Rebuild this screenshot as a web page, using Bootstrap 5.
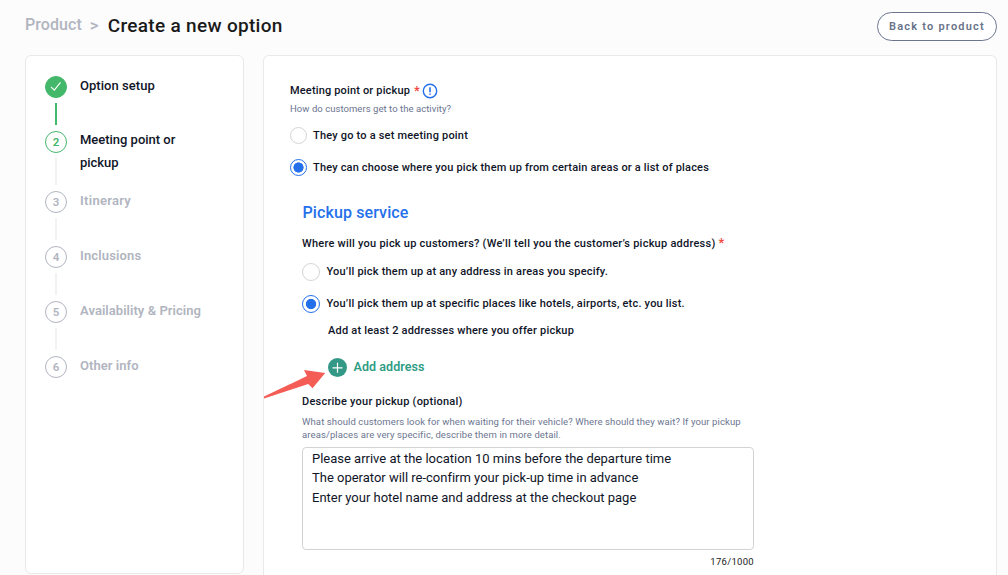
<!DOCTYPE html>
<html lang="en">
<head>
<meta charset="utf-8">
<meta name="viewport" content="width=device-width, initial-scale=1">
<title>Create a new option</title>
<link href="https://cdn.jsdelivr.net/npm/bootstrap@5.3.0/dist/css/bootstrap.min.css" rel="stylesheet">
<style>
  body { background: #fcfcfc; color: #101528; font-family: Roboto, "Noto Sans", sans-serif; font-weight: 500; height: 575px; overflow: hidden; }
  .topbar { height: 55px; padding: 0 11px 0 25px; }
  .crumb { font-size: 16px; line-height: 20px; color: #b1b5c0; letter-spacing: .07px; margin-top: 15px; }
  .crumb-sep { font-size: 17px; margin-left: 8px; }
  .page-title { font-size: 19px; line-height: 24px; color: #1a1a1a; letter-spacing: .31px; margin: 14px 0 0 9px; font-weight: 500; }
  .btn-back { width: 120px; height: 29px; margin-top: 12px; padding: 0; border: 1px solid #6b7590; color: #697289; background: #fff; font-size: 11px; font-weight: 600; line-height: 26px; letter-spacing: 1.22px; }
  .layout { padding: 0 11px 0 25px; gap: 19px; }
  .panel { background: #fff; border: 1px solid #e9e9eb; border-radius: 6px; }
  .side { width: 219px; height: 519px; padding: 20px 19px; }
  .main-panel { height: 520px; padding: 25px 26px 0; border-bottom: 0; border-radius: 6px 6px 0 0; }

  .step { height: 55px; gap: 13px; font-size: 13px; color: #b1b5c0; font-weight: 600; letter-spacing: .05px; }
  .step.tall { height: 60px; }
  .step .dot { width: 22px; height: 22px; border: 1px solid #b1b5c0; border-radius: 50%; font-size: 11.5px; line-height: 20px; text-align: center; }
  .step .rail { width: 2px; flex: 1; margin: 5px 0 6px; background: #f2f2f3; }
  .step .name { line-height: 23px; margin-top: -2px; width: 124px; white-space: nowrap; }
  .step.done, .step.now { color: #101528; font-weight: 500; }
  .step.done .dot { background: #44b86a; border-color: #44b86a; }
  .step.done .rail { background: #44b86a; }
  .step.now .dot { border-color: #44b86a; color: #44b86a; font-weight: 600; }
  .step.now .name { letter-spacing: -.02px; margin-top: -3px; }

  .q { font-size: 11px; line-height: 16px; letter-spacing: .23px; white-space: nowrap; }
  .req { color: #f0463c; font-size: 13px; line-height: 1; }
  .hint { font-size: 9.5px; font-weight: 400; color: #6b7590; line-height: 13px; letter-spacing: .1px; white-space: nowrap; }
  .opt { font-size: 11px; line-height: 17px; letter-spacing: .2px; gap: 6px; height: 17px; white-space: nowrap; }
  .opt .form-check-input { width: 17px; height: 17px; margin: 0; border: 1px solid #d4d4d6; background: #fff; flex: none; }
  .opt .form-check-input:checked { border-color: #2470eb; background: radial-gradient(circle, #2470eb 4.8px, #fff 5.4px); }
  .sub { margin-left: 12px; width: 452px; }
  .sub .opt { height: 18px; gap: 6.5px; }
  .sub .opt .form-check-input { width: 18px; height: 18px; }
  .opt label { margin-top: -1px; }
  .section-title { font-size: 16px; line-height: 24px; color: #2470eb; letter-spacing: .115px; margin: 25px 0 11px .5px; font-weight: 500; }
  .add { height: 19px; color: #2f9c84; font-size: 12.5px; font-weight: 600; letter-spacing: .07px; gap: 6.5px; margin: 19px 0 17px 26px; line-height: 17px; }
  .notes { height: 103px; border: 1px solid #d3d3d6; border-radius: 4px; padding: 1px 9px; font-size: 13px; font-weight: 400; line-height: 19.4px; letter-spacing: -.01px; color: #101528; resize: none; }
  .pointer { position: absolute; left: 263px; top: 368px; }
</style>
</head>
<body>
<header class="topbar d-flex align-items-start">
  <div class="crumb">Product</div>
  <div class="crumb crumb-sep">&gt;</div>
  <h1 class="page-title">Create a new option</h1>
  <button class="btn btn-back rounded-pill ms-auto">Back to product</button>
</header>

<div class="layout d-flex align-items-start">
  <nav class="panel side flex-shrink-0">
    <div class="step done d-flex">
      <div class="d-flex flex-column align-items-center">
        <div class="dot"><svg class="d-block" width="20" height="20" viewBox="0 0 20 20" fill="none" stroke="#fff" stroke-width="1.1"><path d="M5 9.8l3.3 3.3 6.2-7.8"/></svg></div>
        <div class="rail"></div>
      </div>
      <div class="name">Option setup</div>
    </div>
    <div class="step now tall d-flex">
      <div class="d-flex flex-column align-items-center"><div class="dot">2</div><div class="rail"></div></div>
      <div class="name">Meeting point or<br>pickup</div>
    </div>
    <div class="step d-flex">
      <div class="d-flex flex-column align-items-center"><div class="dot">3</div><div class="rail"></div></div>
      <div class="name" style="letter-spacing:.3px">Itinerary</div>
    </div>
    <div class="step d-flex">
      <div class="d-flex flex-column align-items-center"><div class="dot">4</div><div class="rail"></div></div>
      <div class="name" style="letter-spacing:.15px">Inclusions</div>
    </div>
    <div class="step d-flex">
      <div class="d-flex flex-column align-items-center"><div class="dot">5</div><div class="rail"></div></div>
      <div class="name">Availability &amp; Pricing</div>
    </div>
    <div class="step d-flex">
      <div class="d-flex flex-column align-items-center"><div class="dot">6</div></div>
      <div class="name">Other info</div>
    </div>
  </nav>

  <main class="panel main-panel flex-grow-1">
    <div class="q d-flex align-items-center" style="height:20px">
      <span style="letter-spacing:.16px;margin-top:-1px">Meeting point or pickup</span>
      <span class="req" style="margin:-1px 0 0 4px">*</span>
      <svg style="margin-left:2px" width="16" height="16" viewBox="0 0 16 16" fill="none" stroke="#2470eb"><circle cx="8" cy="8" r="6.7" stroke-width="1.4"/><path d="M8 4.3v4.9M8 10.4v1.4" stroke-width="1.6"/></svg>
    </div>
    <div class="hint" style="margin-top:1px;letter-spacing:.05px">How do customers get to the activity?</div>
    <div class="opt d-flex align-items-center" style="margin-top:12px">
      <input class="form-check-input" type="radio" name="arrive" id="a1"><label for="a1">They go to a set meeting point</label>
    </div>
    <div class="opt d-flex align-items-center" style="margin-top:15px">
      <input class="form-check-input" type="radio" name="arrive" id="a2" checked><label for="a2" style="letter-spacing:.175px">They can choose where you pick them up from certain areas or a list of places</label>
    </div>

    <section class="sub">
      <h2 class="section-title">Pickup service</h2>
      <div class="q" style="height:16px;letter-spacing:.24px">Where will you pick up customers? (We’ll tell you the customer’s pickup address) <span class="req">*</span></div>
      <div class="opt d-flex align-items-center" style="margin-top:11px">
        <input class="form-check-input" type="radio" name="where" id="w1"><label for="w1">You’ll pick them up at any address in areas you specify.</label>
      </div>
      <div class="opt d-flex align-items-center" style="margin-top:14px">
        <input class="form-check-input" type="radio" name="where" id="w2" checked><label for="w2">You’ll pick them up at specific places like hotels, airports, etc. you list.</label>
      </div>
      <div class="q" style="margin:10px 0 0 26px;letter-spacing:.21px">Add at least 2 addresses where you offer pickup</div>
      <div class="add d-flex">
        <svg width="19" height="19" viewBox="0 0 19 19"><circle cx="9.5" cy="9.5" r="9.5" fill="#349886"/><path d="M9.5 4.8v10M4.5 9.8h10" stroke="#fff" stroke-width="1.2"/></svg>
        <span>Add address</span>
      </div>
      <div class="q">Describe your pickup (optional)</div>
      <div class="hint" style="margin:5px 0 6px">What should customers look for when waiting for their vehicle? Where should they wait? If your pickup<br>areas/places are very specific, describe them in more detail.</div>
      <textarea class="notes form-control">Please arrive at the location 10 mins before the departure time
The operator will re-confirm your pick-up time in advance
Enter your hotel name and address at the checkout page</textarea>
      <div class="hint text-end" style="margin-top:5px;color:#1a1a1a;letter-spacing:.3px">176/1000</div>
    </section>
  </main>
</div>

<svg class="pointer" width="64" height="32" viewBox="0 0 64 32"><path d="M62.2 5L41 2.1 44 8 1 28.6V30.4L45.2 16 49.5 20.2Z" fill="#f45d56"/></svg>
<script src="https://cdn.jsdelivr.net/npm/bootstrap@5.3.0/dist/js/bootstrap.bundle.min.js"></script>
</body>
</html>
